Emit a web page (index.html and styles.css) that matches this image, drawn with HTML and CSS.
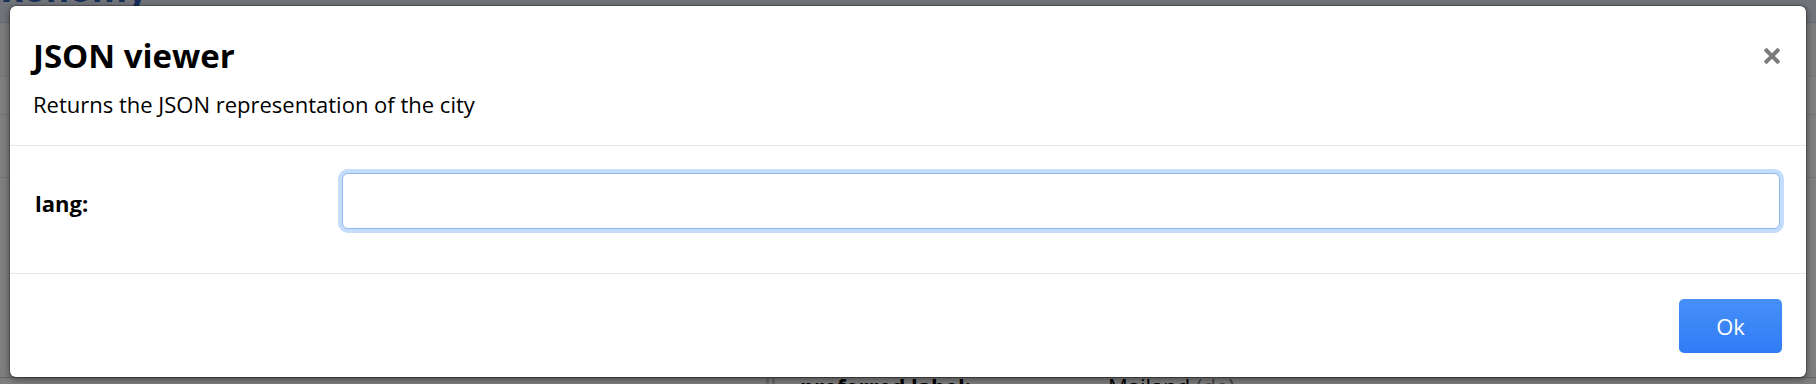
FILE: index.html
```html
<!DOCTYPE html>
<html lang="en">
<head>
<meta charset="utf-8">
<title>JSON viewer</title>
<link rel="stylesheet" href="styles.css">
</head>
<body>
<div class="page">
  <div class="brand"><span class="brand-text">Taxonomy</span></div>
  <div class="nav-row"></div>
  <div class="nav-row second"></div>
  <div class="nav-row third"></div>
  <div class="spacer"></div>
  <div class="prop-row">
    <div class="prop-side"></div>
    <div class="prop-name">preferred label:</div>
    <div class="prop-value">Mailand <span class="lang">(de)</span></div>
  </div>
</div>
<div class="backdrop"></div>
<div class="modal">
  <div class="modal-header">
    <div class="heading">
      <h4 class="modal-title">JSON viewer</h4>
      <p class="modal-desc">Returns the JSON representation of the city</p>
    </div>
    <button class="close" type="button" aria-label="Close">
      <svg width="16" height="16" viewBox="0 0 16 16"><path d="M2.5 2.5 L13.5 13.5 M13.5 2.5 L2.5 13.5" stroke="#7b7b7b" stroke-width="4" stroke-linecap="square" fill="none"/></svg>
    </button>
  </div>
  <div class="modal-body">
    <label class="field-label" for="lang">lang:</label>
    <input id="lang" class="field-input" type="text">
  </div>
  <div class="modal-footer">
    <button class="btn-ok" type="button">Ok</button>
  </div>
</div>
</body>
</html>
```
FILE: styles.css
```css
html, body {
  margin: 0;
  padding: 0;
}
body {
  width: 1816px;
  height: 384px;
  overflow: hidden;
  background: #ffffff;
  font-family: "Open Sans", "DejaVu Sans", sans-serif;
  position: relative;
}
.page {
  height: 384px;
  overflow: hidden;
  display: flex;
  flex-direction: column;
}
.brand {
  height: 22px;
  background: #e2e8f2;
  border-bottom: 1px solid #c9d3e3;
  overflow: hidden;
  flex: none;
}
.brand-text {
  display: block;
  margin-top: -29px;
  margin-left: -40px;
  font-size: 36px;
  line-height: 36px;
  font-weight: 700;
  color: #2f5fb6;
}
.nav-row {
  height: 53px;
  border-bottom: 1px solid #e8e8e8;
  background: #f6f6f6;
  flex: none;
}
.nav-row.second {
  height: 37px;
  background: #ffffff;
}
.nav-row.third {
  height: 62px;
  background: #ffffff;
}
.spacer {
  flex: 1;
}
.prop-row {
  height: 6px;
  display: flex;
  border-top: 1px solid #c8c8c8;
  flex: none;
}
.prop-side {
  width: 775px;
  border-right: 9px double #d0d0d0;
  box-sizing: border-box;
  flex: none;
}
.prop-name {
  width: 308px;
  padding-left: 25px;
  font-size: 22px;
  font-weight: 700;
  line-height: 28px;
  margin-top: -6px;
  color: #000;
  flex: none;
  white-space: nowrap;
}
.prop-value {
  font-size: 22px;
  line-height: 28px;
  margin-top: -6px;
  color: #000;
  white-space: nowrap;
}
.lang {
  color: #888;
}
.backdrop {
  position: absolute;
  inset: 0;
  background: rgba(0, 0, 0, 0.5);
}
.modal {
  position: absolute;
  left: 9px;
  top: 5px;
  width: 1798px;
  box-sizing: border-box;
  background: #ffffff;
  border: 1px solid rgba(0, 0, 0, 0.2);
  border-radius: 7px;
  box-shadow: 0 2px 6px rgba(0, 0, 0, 0.4);
  background-clip: padding-box;
}
.modal-header {
  display: flex;
  justify-content: space-between;
  align-items: flex-start;
  padding: 30px 26px 26px 23px;
  border-bottom: 1px solid #e5e5e5;
}
.modal-title {
  margin: 0;
  font-size: 33px;
  line-height: 40px;
  font-weight: 700;
  color: #000;
}
.modal-desc {
  margin: 13px 0 0;
  font-size: 22px;
  line-height: 30px;
  color: #000;
}
.close {
  margin-top: 12px;
  padding: 0;
  border: 0;
  background: none;
  width: 16px;
  height: 16px;
  display: block;
}
.close svg {
  display: block;
}
.modal-body {
  display: grid;
  grid-template-columns: 309px 1fr;
  align-items: center;
  padding: 27px 26px 44px 23px;
}
.field-label {
  font-size: 22px;
  font-weight: 700;
  line-height: 30px;
  color: #000;
  padding-left: 2px;
  margin-top: 4px;
}
.field-input {
  height: 56px;
  box-sizing: border-box;
  border: 1px solid #8fb9ee;
  border-radius: 6px;
  box-shadow: 0 0 0 4px #c4ddfa;
  outline: none;
  font-family: inherit;
  font-size: 22px;
  padding: 0 12px;
  background: #fff;
}
.modal-footer {
  display: flex;
  justify-content: flex-end;
  padding: 25px 24px 24px;
  border-top: 1px solid #e5e5e5;
}
.btn-ok {
  width: 103px;
  height: 54px;
  border: 0;
  border-radius: 5px;
  background: linear-gradient(#4790f8, #2f7cf5);
  color: #fff;
  font-family: inherit;
  font-size: 22px;
  line-height: 54px;
  padding: 0;
}
```
